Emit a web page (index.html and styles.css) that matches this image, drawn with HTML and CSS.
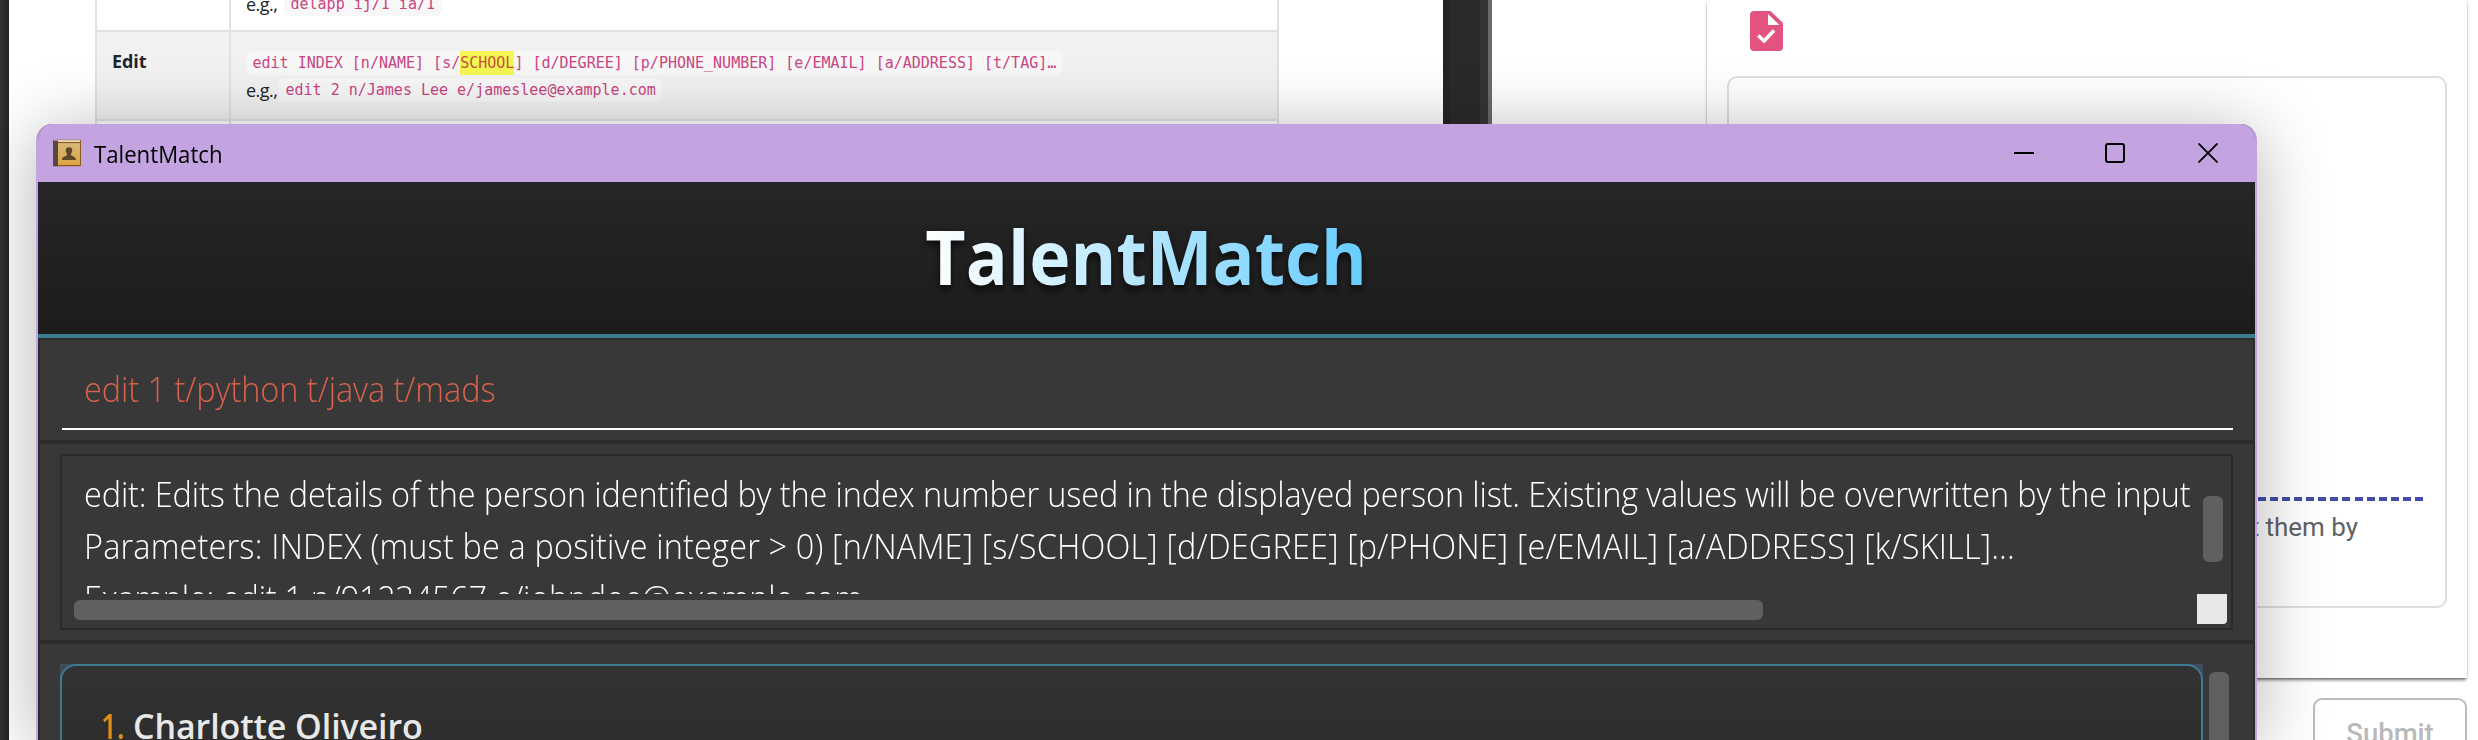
FILE: index.html
```html
<!DOCTYPE html>
<html lang="en">
<head>
<meta charset="utf-8">
<title>TalentMatch</title>
<link rel="stylesheet" href="styles.css">
</head>
<body>
<div class="desktop">
  <div class="edge"></div>
  <div class="guide">
    <div class="table">
      <div class="row row-cut"><div class="cell cmd"></div><div class="cell fmt"><p class="line"><span class="eg">e.g.,</span><code class="code">delapp ij/1 ia/1</code></p></div></div>
      <div class="row row-edit"><div class="cell cmd"><b class="cmd-name">Edit</b></div><div class="cell fmt"><p class="line"><code class="code">edit INDEX [n/NAME] [s/<mark class="hit">SCHOOL</mark>] [d/DEGREE] [p/PHONE_NUMBER] [e/EMAIL] [a/ADDRESS] [t/TAG]…</code></p><p class="line"><span class="eg eg-tight">e.g.,</span><code class="code">edit 2 n/James Lee e/jameslee@example.com</code></p></div></div>
      <div class="row row-next"><div class="cell cmd"></div><div class="cell fmt"></div></div>
    </div>
  </div>
  <div class="gutter"></div>
  <div class="form">
    <div class="sheet">
      <svg class="doc" viewBox="0 0 33 40"><path d="M4 0H20.500L33 12V36Q33 40 29 40H4Q0 40 0 36V4Q0 0 4 0Z" fill="#e2547f"/><path d="M18 3V14H29.500Z" fill="#fff"/><path d="M8.300 24.500L14 30L24 19.500" fill="none" stroke="#fff" stroke-width="3.600"/></svg>
      <div class="upload"><div class="dash"></div><p class="hint"><span>t</span> <span>them by</span></p></div>
    </div>
    <div class="submit"><span>Submit</span></div>
  </div>
</div>

<div class="window">
  <div class="titlebar">
    <svg class="book" viewBox="0 0 28 34" preserveAspectRatio="none"><defs><linearGradient id="cover" x1="0" y1="0" x2="0" y2="1"><stop offset="0" stop-color="#d9b87c"/><stop offset="1" stop-color="#dda53f"/></linearGradient></defs><rect x="0" y="1" width="28" height="32" rx="1" fill="#8a5a1c"/><rect x="1" y="1.500" width="26" height="2" fill="#f5ead2"/><rect x="5" y="5" width="22" height="26.500" fill="url(#cover)"/><rect x="0" y="2" width="5" height="31" fill="#5a4742"/><path d="M16 10C18.500 10 19.500 12 19.200 14.500C19 16.500 18 17.500 18 19C18 21 23 20.500 23 25.500H9C9 20.500 14 21 14 19C14 17.500 13 16.500 12.800 14.500C12.500 12 13.500 10 16 10Z" fill="#5e4726"/></svg>
    <span class="app-name">TalentMatch</span>
    <div class="controls">
      <svg class="ctl" viewBox="0 0 20 20"><path d="M0 10H20" stroke="#000" stroke-width="2"/></svg>
      <svg class="ctl ctl-max" viewBox="0 0 20 20"><rect x="1" y="1" width="18" height="18" rx="2" fill="none" stroke="#000" stroke-width="2"/></svg>
      <svg class="ctl" viewBox="0 0 20 20"><path d="M.5.5L19.500 19.500M19.500.5L.5 19.500" stroke="#000" stroke-width="1.800"/></svg>
    </div>
  </div>
  <div class="banner"><h1 class="logo">TalentMatch</h1></div>
  <div class="pane pane-command"><div class="command"><span class="text t-command">edit 1 t/python t/java t/mads</span></div></div>
  <div class="pane pane-result">
    <div class="result">
      <div class="view">
        <div class="lines">
          <p><span class="text t-summary">edit: Edits the details of the person identified by the index number used in the displayed person list. Existing values will be overwritten by the input</span></p>
          <p><span class="text t-params">Parameters: INDEX (must be a positive integer &gt; 0) [n/NAME] [s/SCHOOL] [d/DEGREE] [p/PHONE] [e/EMAIL] [a/ADDRESS] [k/SKILL]...</span></p>
          <p><span class="text t-example">Example: edit 1 p/91234567 e/johndoe@example.com</span></p>
        </div>
        <div class="vtrack"><div class="vthumb"></div></div>
      </div>
      <div class="htrack"><div class="hthumb"></div><div class="corner"></div></div>
    </div>
  </div>
  <div class="pane pane-list">
    <div class="slot"><div class="person"><span class="index">1.</span><span class="name">Charlotte Oliveiro</span></div></div>
    <div class="list-thumb"></div>
  </div>
</div>
</body>
</html>
```
FILE: styles.css
```css
* { box-sizing: border-box; }
body { margin: 0; width: 2478px; height: 740px; overflow: hidden; position: relative; background: #fff; font-family: "Open Sans", "Noto Sans", sans-serif; }
p, h1 { margin: 0; }

/* Pages behind the window */
.desktop { display: flex; width: 2478px; height: 740px; overflow: hidden; }
.edge { width: 9px; background: linear-gradient(90deg, #343434, #232323); }
.guide { width: 1434px; padding-left: 86px; }
.table { width: 1184px; border: solid #dee2e6; border-width: 0 2px; }
.row { display: flex; border-bottom: 2px solid #dee2e6; }
.row-cut { height: 32px; }
.row-edit { height: 89px; background: #f1f1f1; }
.row-next { height: 40px; }
.cell { height: 100%; }
.cmd { width: 134px; border-right: 2px solid #dee2e6; padding: 14px 0 0 15px; }
.fmt { flex: 1; padding: 17px 0 0 15px; }
.row-cut .fmt { padding-top: 0; margin-top: -10px; height: 30px; }
.cmd-name { display: block; font-size: 18px; line-height: 30px; color: #212529; letter-spacing: -0.1px; }
.line { display: flex; align-items: center; height: 27px; font-size: 18px; color: #212529; white-space: nowrap; }
.eg { width: 38px; letter-spacing: -0.5px; }
.eg-tight { width: 33px; }
.code { font: 15px/24px "DejaVu Sans Mono", monospace; color: #ca4583; background: #f7f7f7; border-radius: 6px; padding: 0 6.500px; }
.hit { display: inline-block; background: #f5f752; color: #c8513f; }
.gutter { width: 49px; background: linear-gradient(90deg, #242424 0 7px, #2a2a2a 7px 37px, #353535 37px 45px, #6c6a68 45px); }
.form { flex: 1; padding-left: 215px; }
.sheet { width: 760px; height: 678px; padding: 11px 0 0 20px; background: #fff; box-shadow: 0 3px 3px -1px rgba(0,0,0,.55), 0 0 2px rgba(0,0,0,.2); }
.doc { display: block; width: 33px; height: 40px; margin-left: 23px; }
.upload { width: 720px; height: 532px; margin-top: 25px; border: 2px solid #dedede; border-radius: 10px; padding: 419px 22px 0 0; }
.dash { height: 4px; background: repeating-linear-gradient(270deg, #444ba8 0 8px, transparent 8px 12.100px); }
.hint { display: flex; justify-content: flex-end; gap: 6px; margin: 8px 65px 0 0; font: 26px/36px Roboto, sans-serif; color: #5f6368; }
.submit { display: flex; justify-content: center; width: 154px; height: 42px; overflow: hidden; margin: 20px 0 0 606px; border: 2px solid #bdbdbd; border-bottom: 0; border-radius: 9px 9px 0 0; font: 500 27.500px/68px Roboto, sans-serif; color: #b9b9b9; }

/* Application window */
.window { position: absolute; left: 36px; top: 124px; width: 2221px; height: 616px; border: solid #c3a3e0; border-width: 0 2px; border-radius: 16px 16px 0 0; background: #383838; box-shadow: 0 8px 70px rgba(0,0,0,.3); overflow: hidden; }
.titlebar { display: flex; align-items: center; height: 58px; padding: 0 37px 0 15px; background: #c3a3e0; }
.book { width: 28px; height: 28px; }
.app-name { margin: 1px 0 0 13px; font-size: 23px; line-height: 30px; color: #000; transform: scaleX(.965); transform-origin: 0 50%; }
.controls { display: flex; gap: 72px; margin-left: auto; }
.ctl { width: 20px; height: 20px; }
.ctl-max { margin: 0 1px 0 -1px; }
.banner { display: flex; justify-content: center; height: 156px; border-bottom: 4px solid #3e7b91; background: linear-gradient(#262628, #1c1c1c); }
.logo { margin-top: 22px; font-size: 75px; line-height: 104px; font-weight: 700; height: 104px; color: transparent; background: linear-gradient(90deg, #fff, #66ccff); background-clip: text; -webkit-background-clip: text; filter: drop-shadow(0 4px 4px rgba(0,0,0,.7)); transform: scaleX(.931); }
.pane { border: 2px solid #2b2b2b; }
.text { display: inline-block; transform: scaleX(.955); transform-origin: 0 50%; }
.t-command { letter-spacing: -0.05px; }
.t-summary { letter-spacing: -0.14px; }
.t-params { letter-spacing: 0.17px; }
.t-example { letter-spacing: -0.3px; }
.pane-command { height: 104px; padding: 0 20px 10px 22px; }
.command { height: 90px; border-bottom: 2px solid #fff; padding: 23px 0 0 22px; font-size: 34px; line-height: 52px; font-weight: 300; color: #d9614b; white-space: nowrap; }
.pane-result { height: 200px; padding: 10px 20px 10px; }
.result { height: 176px; border: 2px solid #2b2b2b; }
.view { display: flex; height: 138px; overflow: hidden; }
.lines { width: 2141px; padding: 12px 0 0 22px; font-size: 34px; line-height: 52px; font-weight: 300; color: #fff; white-space: nowrap; }
.vtrack { padding-top: 40px; }
.vthumb { width: 20px; height: 66px; border-radius: 6px; background: #606060; }
.htrack { display: flex; }
.hthumb { width: 1689px; height: 20px; margin: 6px 0 0 12px; border-radius: 6px; background: #606060; }
.corner { width: 30px; height: 30px; margin-left: 434px; border-radius: 0 0 4px 0; background: #e8e8e8; }
.pane-list { display: flex; height: 98px; padding: 20px 20px 0; border-bottom: 0; }
.slot { width: 2143px; height: 76px; overflow: hidden; background: #424b5c; }
.person { display: flex; height: 76px; padding: 34px 0 0 39px; border: 2px solid #3e7b91; border-bottom: 0; border-radius: 16px 16px 0 0; background: linear-gradient(#323232, #2e2e2e); font-size: 34px; line-height: 52px; font-weight: 600; }
.index { width: 32px; color: #e09018; transform: scaleX(.82); transform-origin: 0 50%; }
.name { color: #e8e8e8; letter-spacing: -0.1px; }
.list-thumb { width: 20px; height: 68px; margin: 8px 0 0 6px; border-radius: 6px 6px 0 0; background: #606060; }
```
